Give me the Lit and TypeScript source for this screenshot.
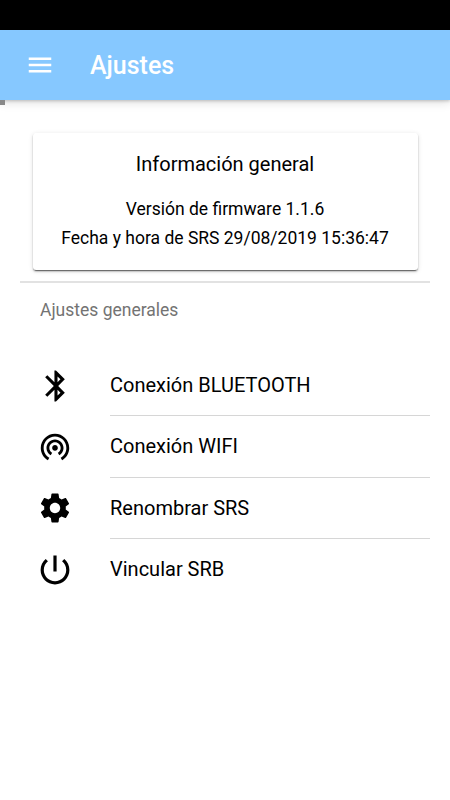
import { LitElement, html, css, svg } from "lit";
import { customElement } from "lit/decorators.js";

const icons = {
  bluetooth: svg`<path d="M17.71 7.71L12 2h-1v7.59L6.41 5 5 6.41 10.59 12 5 17.59 6.41 19 11 14.41V22h1l5.71-5.71-4.3-4.29 4.3-4.29zM13 5.83l1.88 1.88L13 9.59V5.83zm1.88 10.46L13 18.17v-3.76l1.88 1.88z"/>`,
  wifi: svg`<path d="M12 11c-1.1 0-2 .9-2 2s.9 2 2 2 2-.9 2-2-.9-2-2-2zm6 2c0-3.31-2.69-6-6-6s-6 2.69-6 6c0 2.22 1.21 4.15 3 5.19l1-1.74c-1.19-.7-2-1.97-2-3.45 0-2.21 1.79-4 4-4s4 1.79 4 4c0 1.48-.81 2.75-2 3.45l1 1.74c1.79-1.04 3-2.97 3-5.19zM12 3C6.48 3 2 7.48 2 13c0 3.7 2.01 6.92 4.99 8.65l1-1.73C5.61 18.53 4 15.96 4 13c0-4.42 3.58-8 8-8s8 3.58 8 8c0 2.96-1.61 5.53-4 6.92l1 1.73c2.99-1.73 5-4.95 5-8.65 0-5.52-4.48-10-10-10z"/>`,
  gear: svg`<path d="M19.43 12.98c.04-.32.07-.64.07-.98s-.03-.66-.07-.98l2.11-1.65c.19-.15.24-.42.12-.64l-2-3.46c-.12-.22-.39-.3-.61-.22l-2.49 1c-.52-.4-1.08-.73-1.69-.98l-.38-2.65C14.46 2.18 14.25 2 14 2h-4c-.25 0-.46.18-.49.42l-.38 2.65c-.61.25-1.17.59-1.69.98l-2.49-1c-.23-.09-.49 0-.61.22l-2 3.46c-.13.22-.07.49.12.64l2.11 1.65c-.04.32-.07.65-.07.98s.03.66.07.98l-2.11 1.65c-.19.15-.24.42-.12.64l2 3.46c.12.22.39.3.61.22l2.49-1c.52.4 1.08.73 1.69.98l.38 2.65c.03.24.24.42.49.42h4c.25 0 .46-.18.49-.42l.38-2.65c.61-.25 1.17-.59 1.69-.98l2.49 1c.23.09.49 0 .61-.22l2-3.46c.12-.22.07-.49-.12-.64l-2.11-1.65zM12 15.6c-1.99 0-3.6-1.61-3.6-3.6s1.61-3.6 3.6-3.6 3.6 1.61 3.6 3.6-1.61 3.6-3.6 3.6z"/>`,
  power: svg`<path d="M13 3h-2v10h2V3zm4.83 2.17l-1.42 1.42C17.99 7.86 19 9.81 19 12c0 3.87-3.13 7-7 7s-7-3.13-7-7c0-2.19 1.01-4.14 2.58-5.42L6.17 5.17C4.23 6.82 3 9.26 3 12c0 4.97 4.03 9 9 9s9-4.03 9-9c0-2.74-1.23-5.18-3.17-6.83z"/>`,
};

const items = [
  { icon: icons.bluetooth, label: "Conexión BLUETOOTH", box: "1.66 2.3 19.4 19.4" },
  { icon: icons.wifi, label: "Conexión WIFI", box: "1.45 1.77 21.1 21.1" },
  { icon: icons.gear, label: "Renombrar SRS", box: "1.6 1.6 20.8 20.8" },
  { icon: icons.power, label: "Vincular SRB", box: "2.62 2.62 18.75 18.75" },
];

@customElement("app-root")
export class AppRoot extends LitElement {
  static styles = css`
    :host { display: block; width: 450px; height: 800px; background: #fff; font-family: Roboto, sans-serif; color: #000; overflow: hidden; }
    .status { height: 30px; background: #000; }
    header { height: 70px; background: #86c8ff; display: flex; align-items: center; box-shadow: 0 2px 10px rgba(0,0,0,.14), 0 1px 3px rgba(0,0,0,.2); box-sizing: border-box; padding-left: 25px; }
    .menu { width: 30px; height: 30px; fill: #fff; }
    h1 { margin: 1px 0 0 35px; padding-top: 1px; font-size: 25px; font-weight: 500; color: #fff; line-height: 30px; }
    .mark { width: 5px; height: 5px; background: #888; position: relative; }
    .card { margin: 28px 32.5px 0; height: 137px; box-sizing: border-box; padding-top: 18px; border-radius: 3px; text-align: center; box-shadow: 0 2px 2px rgba(0,0,0,.14), 0 3px 1px -2px rgba(0,0,0,.35), 0 1px 5px rgba(0,0,0,.12), 0 1px 1px rgba(0,0,0,.25); }
    h2 { margin: 0 0 18px; font-size: 20px; font-weight: 400; line-height: 26px; }
    .card p { margin: 0; font-size: 17.5px; line-height: 29px; }
    .rule { height: 2px; margin: 11px 20px 0; background: #e2e2e2; }
    h3 { margin: 15px 40px 33px; font-size: 17.5px; line-height: 24px; font-weight: 400; color: #737373; }
    .item { display: flex; align-items: center; padding-left: 40px; height: 61.3px; }
    .item svg { width: 30px; height: 30px; fill: #000; flex: none; overflow: visible; }
    .label { margin: 0 20px 0 40px; flex: 1; height: 100%; box-sizing: border-box; display: flex; align-items: center; font-size: 20px; border-bottom: 1px solid #d6d6d6; }
    .item:last-child .label { border-color: transparent; }
  `;

  render() {
    return html`
      <div class="status"></div>
      <header>
        <svg class="menu" viewBox="0 0 24 24"><path d="M3 18h18v-2H3v2zm0-5h18v-2H3v2zm0-7v2h18V6H3z"/></svg>
        <h1>Ajustes</h1>
      </header>
      <div class="mark"></div>
      <section class="card">
        <h2>Información general</h2>
        <p>Versión de firmware 1.1.6</p>
        <p>Fecha y hora de SRS 29/08/2019 15:36:47</p>
      </section>
      <div class="rule"></div>
      <h3>Ajustes generales</h3>
      <div class="list">
        ${items.map((i) => html`<div class="item"><svg viewBox=${i.box}>${i.icon}</svg><div class="label">${i.label}</div></div>`)}
      </div>
    `;
  }
}
